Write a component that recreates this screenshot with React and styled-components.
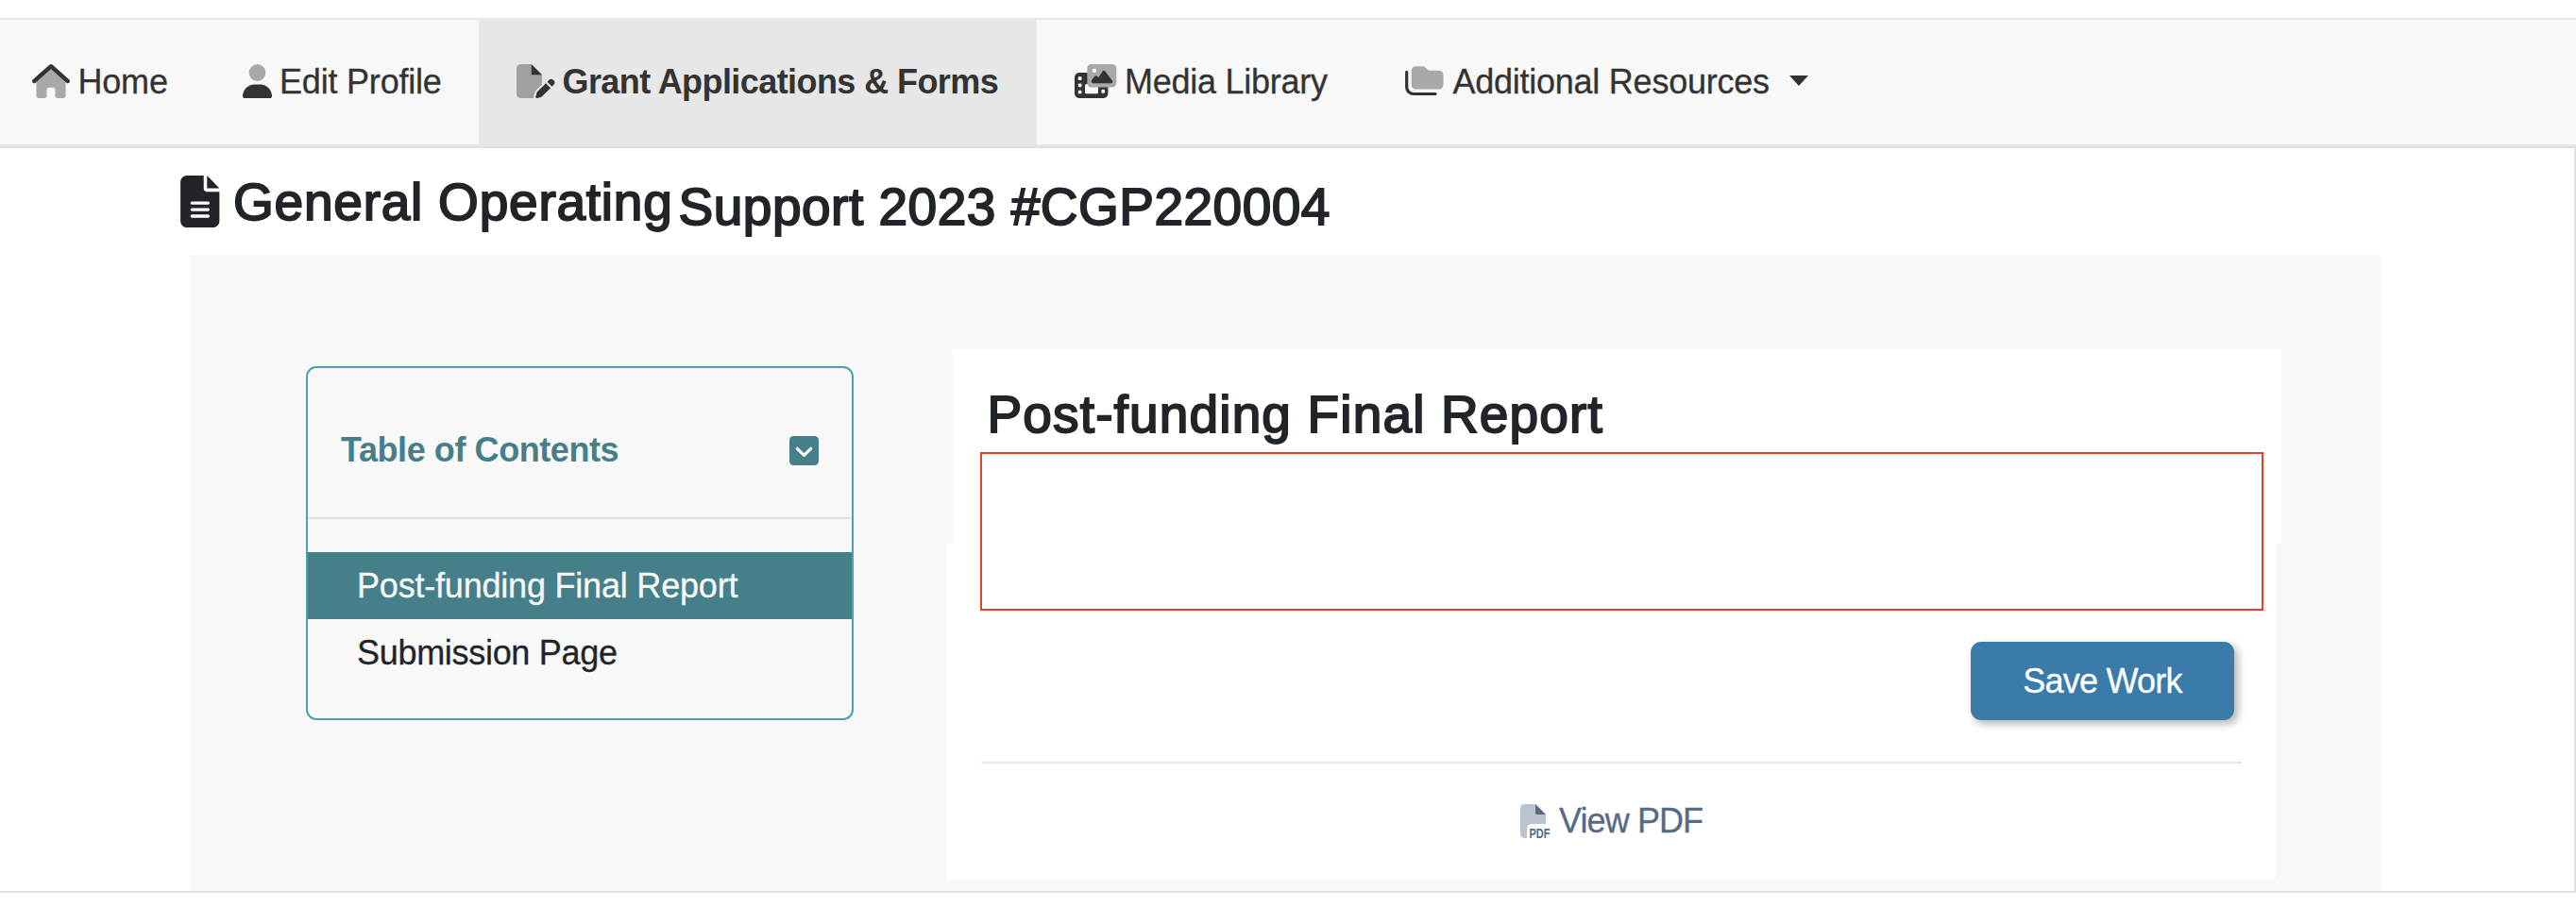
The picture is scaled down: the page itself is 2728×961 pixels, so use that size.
import React from "react";
import styled, { createGlobalStyle } from "styled-components";

const GlobalStyle = createGlobalStyle`
  *, *::before, *::after { box-sizing: border-box; }
  body {
    margin: 0;
    background: #fff;
    color: #212529;
    font-family: "Liberation Sans", Arial, Helvetica, sans-serif;
    font-size: 36px;
    line-height: 1;
  }
  h1, h2, p { margin: 0; }
`;

const Page = styled.div`
  width: 2728px;
  height: 961px;
  padding-top: 19px;
  overflow: hidden;
  background: #fff;
`;

const NavBar = styled.nav`
  display: flex;
  height: 136px;
  background: #f8f8f8;
  border-top: 2px solid #e7e7e7;
  border-bottom: 2px solid #e7e7e7;
`;

const Icon = styled.svg`
  display: block;
  flex: none;
  overflow: visible;
`;

const NavItem = styled.a`
  display: flex;
  align-items: center;
  flex: none;
  gap: ${(p) => p.$gap || 8}px;
  width: ${(p) => p.$width}px;
  margin: -2px 0;
  padding-left: ${(p) => p.$inset || 40}px;
  background: ${(p) => (p.$active ? "#e7e7e7" : "transparent")};
  color: #333;
  font-weight: ${(p) => (p.$active ? 700 : 400)};
  white-space: nowrap;
  border: solid #e7e7e7;
  border-width: 2px 0;
  text-decoration: none;

  ${Icon} {
    margin-top: -2px;
  }
`;

const Label = styled.span`
  letter-spacing: ${(p) => p.$track || 0}px;
  -webkit-text-stroke: ${(p) => (p.$bold ? 0 : 0.3)}px currentColor;
`;

const Caret = styled.span`
  margin-left: 11px;
  margin-top: -4px;
  border-top: 11px solid #333;
  border-left: 10px solid transparent;
  border-right: 10px solid transparent;
`;

const Content = styled.main`
  height: 791px;
  border: solid #dee2e6;
  border-width: 2px 2px 2px 0;
`;

const TitleRow = styled.header`
  display: flex;
  align-items: flex-start;
  height: 113px;
  padding: 25px 0 0 190.5px;

  ${Icon} {
    margin-top: 4px;
  }
`;

const Title = styled.h1`
  font-size: 55px;
  font-weight: 400;
  line-height: 64px;
  letter-spacing: ${(p) => p.$track}px;
  margin-left: ${(p) => p.$left}px;
  padding-top: ${(p) => p.$drop || 0}px;
  white-space: nowrap;
  -webkit-text-stroke: 1.9px currentColor;
`;

const Workspace = styled.section`
  display: flex;
  align-items: flex-start;
  width: 2320px;
  height: 674px;
  margin-left: 201px;
  padding: 100px 0 0 123px;
  background: #f8f8f8;
`;

const Contents = styled.aside`
  width: 580px;
  height: 375px;
  margin-top: 18px;
  border: 2px solid #4f9fb3;
  border-radius: 11px;
`;

const ContentsHead = styled.div`
  display: flex;
  align-items: center;
  justify-content: space-between;
  height: 160px;
  padding: 16px 35px 0;
  border-bottom: 2px solid #dee0e0;
  margin-bottom: 35px;
  color: #457f89;
  font-weight: 700;
`;

const ContentsLink = styled.a`
  display: flex;
  align-items: center;
  height: 71px;
  padding-left: 52px;
  background: ${(p) => (p.$active ? "#457f89" : "transparent")};
  color: ${(p) => (p.$active ? "#f8f8f8" : "#212529")};
`;

const Form = styled.div`
  margin-left: 99px;
`;

const FormHead = styled.div`
  width: 1407px;
  height: 206px;
  margin-left: 6px;
  padding: 37px 0 0 29px;
  background: #fff;
`;

const FormTitle = styled(Title)`
  height: 72px;
`;

const ErrorBox = styled.div`
  position: relative;
  z-index: 1;
  width: 1359px;
  height: 168px;
  border: 2px solid #e5412a;
`;

const FormBody = styled.div`
  display: flex;
  flex-direction: column;
  width: 1407px;
  height: 356px;
  padding: 104px 36px 0;
  background: #fff;
`;

const SaveButton = styled.button`
  align-self: flex-end;
  width: 279px;
  height: 83px;
  margin-right: 8px;
  padding: 0;
  border: 0;
  border-radius: 11px;
  background: #3a7ba9;
  box-shadow: 4px 4px 10px rgba(0, 0, 0, 0.3);
  color: #fff;
  font: inherit;
`;

const Rule = styled.hr`
  width: 1335px;
  height: 2px;
  margin: 44px 0 43px;
  border: 0;
  background: #e5e5e5;
`;

const PdfLink = styled.a`
  display: flex;
  align-items: center;
  gap: 10px;
  margin-left: 571px;
  color: #566985;
`;

const HomeIcon = () => (
  <Icon width="40" height="36" viewBox="0 0 576 512" preserveAspectRatio="none">
    <path fill="#a9a9a9" d="M64 270V472c0 22 18 40 40 40h88c18 0 32-14 32-32V384c0-18 14-32 32-32h64c18 0 32 14 32 32v96c0 18 14 32 32 32h88c22 0 40-18 40-40V270L288 74z" />
    <path fill="#333" d="M267 8c12-11 30-11 42 0L565 232c13 12 15 32 3 45s-32 15-45 3L288 75 53 280c-13 12-33 10-45-3s-10-33 3-45z" />
  </Icon>
);

const UserIcon = () => (
  <Icon width="31" height="36" viewBox="0 0 448 512" preserveAspectRatio="none">
    <circle cx="224" cy="128" r="128" fill="#a9a9a9" />
    <path fill="#333" d="M0 482C0 384 80 304 178 304h92c98 0 178 80 178 178 0 17-13 30-30 30H30c-17 0-30-13-30-30z" />
  </Icon>
);

const FilePenIcon = () => (
  <Icon width="40.5" height="36" viewBox="0 0 576 512">
    <path fill="#a0a0a0" d="M64 0C29 0 0 29 0 64v384c0 35 29 64 64 64h192c-1-6 0-12 1-18l15-61c4-14 11-27 21-37l91-90V160L224 0z" />
    <path fill="#333" d="M224 0v160h160zM550 235c-16-15-41-15-57 0l-29 30 71 71 29-30c16-15 16-41 0-56zM312 417c-4 4-7 9-8 15l-15 60c-3 12 7 22 19 19l60-15c6-1 11-4 15-8l130-130-71-71z" />
  </Icon>
);

const MediaIcon = () => (
  <Icon width="45" height="36" viewBox="0 0 640 512">
    <rect y="128" width="504" height="384" rx="68" fill="#333" />
    <rect x="156" y="300" width="200" height="146" rx="22" fill="#f8f8f8" />
    <rect x="54" y="190" width="52" height="52" rx="14" fill="#f8f8f8" />
    <rect x="54" y="292" width="52" height="52" rx="14" fill="#f8f8f8" />
    <rect x="54" y="394" width="52" height="52" rx="14" fill="#f8f8f8" />
    <rect x="404" y="380" width="52" height="56" rx="14" fill="#f8f8f8" />
    <rect x="190" width="440" height="348" rx="64" fill="#a9a9a9" />
    <circle cx="298" cy="98" r="30" fill="#f8f8f8" />
    <path fill="#333" d="M460 107c-5-7-12-11-20-11s-16 4-20 11l-62 96-16-20c-5-6-12-9-19-9s-14 3-19 9l-46 60c-13 17-2 44 19 44h270c22 0 33-22 21-38z" />
  </Icon>
);

const FoldersIcon = () => (
  <Icon width="40.5" height="36" viewBox="0 0 576 512">
    <path fill="#a9a9a9" d="M96 96c0-35 29-64 64-64h101c17 0 33 7 45 19l26 26c12 12 28 19 45 19h135c35 0 64 29 64 64v152c0 35-29 64-64 64H160c-35 0-64-29-64-64z" />
    <path fill="none" stroke="#333" strokeWidth="46" strokeLinecap="round" d="M24 120v224c0 58 46 104 104 104h328" />
  </Icon>
);

const FileLinesIcon = () => (
  <Icon width="41.500" height="55" viewBox="0 0 384 512">
    <path fill="#212529" d="M64 0C29 0 0 29 0 64v384c0 35 29 64 64 64h256c35 0 64-29 64-64V160H261c-18 0-32-14-32-32V0zM262 0v125h122z" />
    <path fill="none" stroke="#fff" strokeWidth="32" strokeLinecap="round" d="M114 271h158M114 336h158M114 400h158" />
  </Icon>
);

const SquareChevronIcon = () => (
  <Icon width="31" height="31" viewBox="0 0 448 448">
    <rect width="448" height="448" rx="64" fill="currentColor" />
    <path fill="none" stroke="#f8f8f8" strokeWidth="46" strokeLinecap="round" strokeLinejoin="round" d="M120 192l104 104 104-104" />
  </Icon>
);

const PdfIcon = () => (
  <Icon width="31" height="36" viewBox="0 0 31 36">
    <path fill="#bbc3ce" d="M4.500 0H16L27 11V21H12a5 5 0 0 0-5 5v10H4.500A4.500 4.500 0 0 1 0 31.500v-27A4.500 4.500 0 0 1 4.500 0z" />
    <path fill="#566985" d="M16 0v9c0 1.300 1 2 2 2h9z" />
    <text x="9.500" y="35.500" fontSize="15.500" fontWeight="700" textLength="22" lengthAdjust="spacingAndGlyphs" fill="#566985">PDF</text>
  </Icon>
);

export default function App() {
  return (
    <>
      <GlobalStyle />
      <Page>
        <NavBar>
          <NavItem $width={217} $inset={33.5} $gap={9}>
            <HomeIcon />
            <Label $track={-0.2}>Home</Label>
          </NavItem>
          <NavItem $width={290}>
            <UserIcon />
            <Label $track={-0.2}>Edit Profile</Label>
          </NavItem>
          <NavItem $width={591} $active>
            <FilePenIcon />
            <Label $bold $track={-0.58}>Grant Applications &amp; Forms</Label>
          </NavItem>
          <NavItem $width={350}>
            <MediaIcon />
            <Label $track={-0.25}>Media Library</Label>
          </NavItem>
          <NavItem $width={505} $gap={10}>
            <FoldersIcon />
            <Label $track={-0.25}>Additional Resources</Label>
            <Caret />
          </NavItem>
        </NavBar>
        <Content>
          <TitleRow>
            <FileLinesIcon />
            <Title $left={15} $track={0.77}>General Operating</Title>
            <Title $left={6} $track={0.5} $drop={5}>Support 2023 #CGP220004</Title>
          </TitleRow>
          <Workspace>
            <Contents>
              <ContentsHead>
                <Label $bold $track={-0.42}>Table of Contents</Label>
                <SquareChevronIcon />
              </ContentsHead>
              <ContentsLink $active>
                <Label $track={-0.2}>Post-funding Final Report</Label>
              </ContentsLink>
              <ContentsLink>
                <Label $track={-0.3}>Submission Page</Label>
              </ContentsLink>
            </Contents>
            <Form>
              <FormHead>
                <FormTitle as="h2" $left={7.5} $track={1.15}>Post-funding Final Report</FormTitle>
                <ErrorBox />
              </FormHead>
              <FormBody>
                <SaveButton>
                  <Label $track={-0.75}>Save Work</Label>
                </SaveButton>
                <Rule />
                <PdfLink>
                  <PdfIcon />
                  <Label $track={-0.9}>View PDF</Label>
                </PdfLink>
              </FormBody>
            </Form>
          </Workspace>
        </Content>
      </Page>
    </>
  );
}
